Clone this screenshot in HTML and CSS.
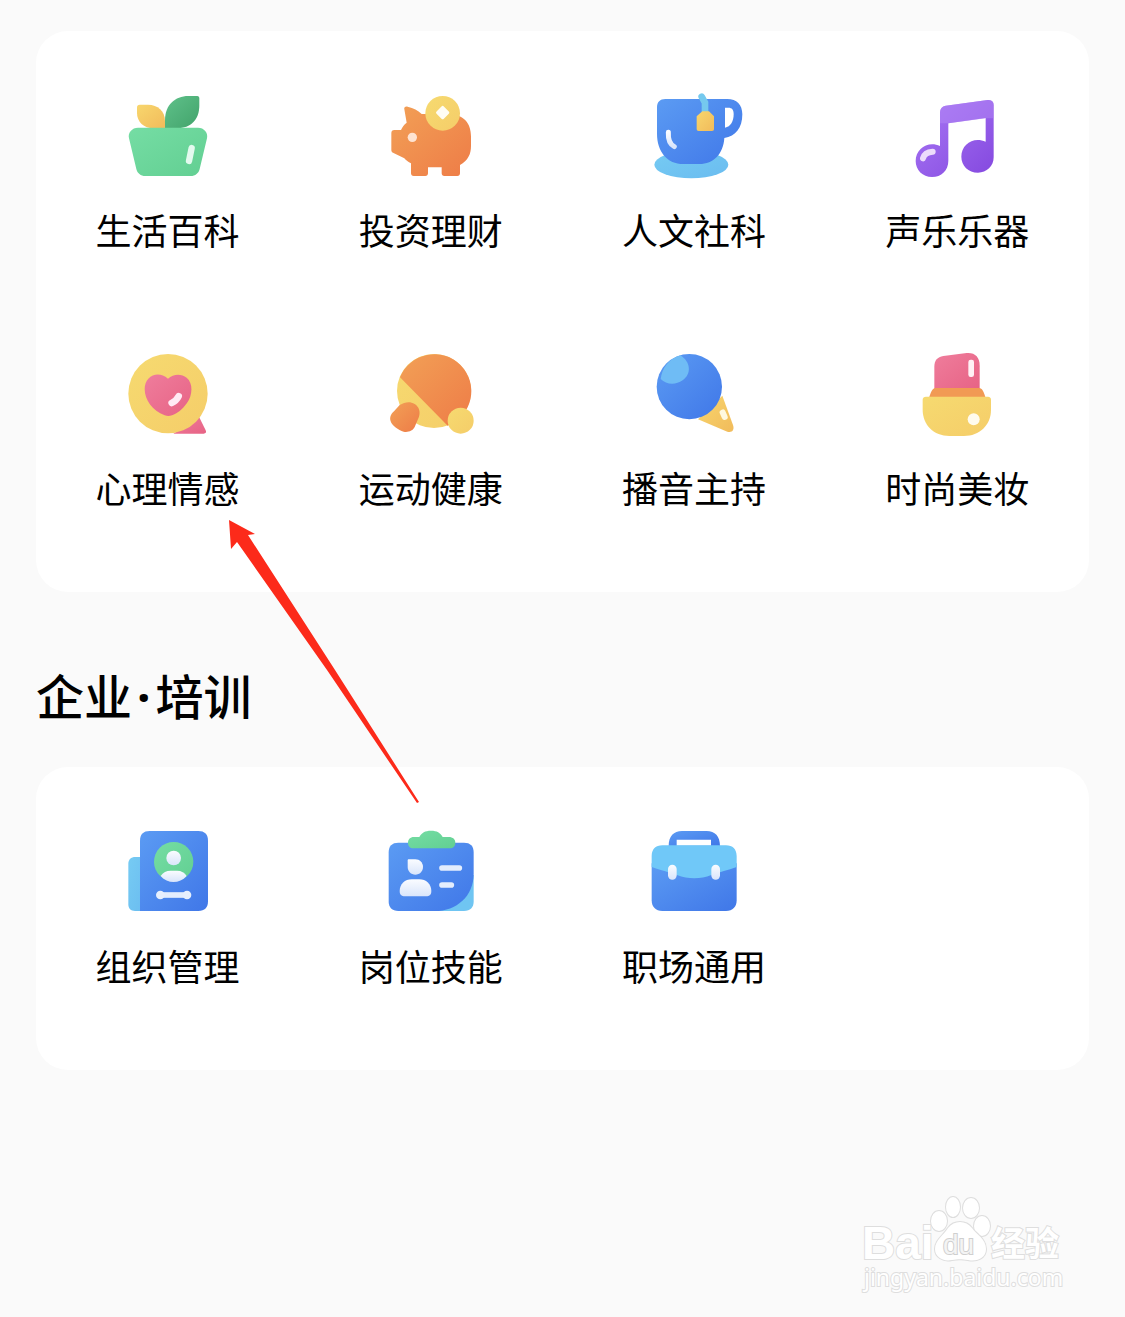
FILE: index.html
```html
<!DOCTYPE html>
<html lang="zh-CN">
  <head>
    <meta charset="utf-8">
    <meta name="viewport" content="width=device-width, initial-scale=1">
    <title>企业·培训</title>
    <link rel="stylesheet" href="styles.css">
  </head>
  <body>
    <svg class="defs" width="0" height="0" aria-hidden="true">
      <defs>
        <linearGradient id="blue" x1="0" y1="0" x2="1" y2="1"><stop offset="0" stop-color="#5b9bf3"/><stop offset="1" stop-color="#4077e8"/></linearGradient>
        <linearGradient id="sky" x1="0" y1="0" x2="1" y2="1"><stop offset="0" stop-color="#76cbf3"/><stop offset="1" stop-color="#6abcf0"/></linearGradient>
        <linearGradient id="green" x1="0" y1="0" x2="1" y2="1"><stop offset="0" stop-color="#75dda4"/><stop offset="1" stop-color="#62cf92"/></linearGradient>
        <linearGradient id="leaf" x1="0" y1="0" x2="1" y2="1"><stop offset="0" stop-color="#5fc18a"/><stop offset="1" stop-color="#42a36b"/></linearGradient>
        <linearGradient id="orange" x1="0" y1="0" x2="1" y2="1"><stop offset="0" stop-color="#f2a056"/><stop offset="1" stop-color="#ee7c47"/></linearGradient>
        <linearGradient id="yellow" x1="0" y1="0" x2="1" y2="1"><stop offset="0" stop-color="#f6da70"/><stop offset="1" stop-color="#f5cd69"/></linearGradient>
        <linearGradient id="amber" x1="0" y1="0" x2="1" y2="1"><stop offset="0" stop-color="#f8d66d"/><stop offset="1" stop-color="#f1bb5b"/></linearGradient>
        <linearGradient id="pink" x1="0" y1="0" x2="1" y2="1"><stop offset="0" stop-color="#ef7d9c"/><stop offset="1" stop-color="#e76385"/></linearGradient>
        <linearGradient id="purple" x1="0" y1="0" x2="1" y2="1"><stop offset="0" stop-color="#a978f5"/><stop offset="1" stop-color="#8448df"/></linearGradient>
        <linearGradient id="shine" x1="0" y1="0" x2="0" y2="1"><stop offset="0" stop-color="#fafcff"/><stop offset="1" stop-color="#d9e5fb"/></linearGradient>
      </defs>
    </svg>

    <main class="page">
      <nav class="card">
        <a class="item" href="#life">
          <svg class="icon" viewBox="-6 0 360 330" aria-hidden="true">
            <path fill="url(#amber)" d="M89 74h25c29 0 51 19 51 49v22h-34c-30 0-50-20-50-46V82c0-5 3-8 8-8z"/>
            <path fill="url(#leaf)" d="M165 145v-25c0-45 30-72 70-72h27c4 0 6 3 6 7v21c0 43-25 69-67 69z"/>
            <path fill="url(#green)" d="M84 143h180c18 0 31 15 27 32l-22 92c-3 13-13 21-27 21H106c-14 0-24-8-27-21l-22-92c-4-17 9-32 27-32z"/>
            <path stroke="#e4faef" stroke-width="19" stroke-linecap="round" d="M245 204l-8 39"/>
          </svg>
          <span class="label">生活百科</span>
        </a>
        <a class="item" href="#finance">
          <svg class="icon" viewBox="-12 0 360 330" aria-hidden="true">
            <path fill="url(#orange)" d="M88 88c-2-6 4-10 10-8 18 4 30 10 42 22h80c44 0 68 26 68 67v29c0 25-9 43-33 57v25c0 5-3 8-8 8h-39c-5 0-8-3-8-8v-18h-41v18c0 5-3 8-8 8h-35c-5 0-8-3-8-8v-30c-8-4-15-9-20-15l-34-17c-4-2-5-5-5-9v-50c0-6 3-9 9-9h20c4-9 9-16 17-22z"/>
            <circle cx="203" cy="100" r="52" fill="url(#yellow)"/>
            <rect x="188" y="82" width="31" height="31" rx="5" fill="#fffdf4" transform="rotate(45 203 97)"/>
            <circle cx="112" cy="172" r="14" fill="#fee3d1"/>
          </svg>
          <span class="label">投资理财</span>
        </a>
        <a class="item" href="#humanities">
          <svg class="icon" viewBox="-18 0 360 330" aria-hidden="true">
            <ellipse cx="154" cy="254" rx="111" ry="41" fill="url(#sky)"/>
            <path fill="url(#blue)" fill-rule="evenodd" d="M76 57h186c28 0 45 17 45 46 0 40-20 67-54 71-3 48-32 78-75 78h-48c-48 0-79-37-79-91V82c0-16 9-25 25-25zm179 26v60c17-3 26-19 26-41 0-13-5-19-16-19z"/>
            <path stroke="#75c9ee" stroke-width="20" stroke-linecap="round" fill="none" d="M185 50l10 18v35"/>
            <path fill="url(#amber)" d="M187 94h20l15 15v38c0 4-2 6-6 6h-40c-4 0-6-2-6-6v-38z"/>
            <path stroke="url(#shine)" stroke-width="15" stroke-linecap="round" fill="none" d="M85 157c-1 21 5 36 18 43"/>
          </svg>
          <span class="label">人文社科</span>
        </a>
        <a class="item" href="#music">
          <svg class="icon" viewBox="-9 0 360 330" aria-hidden="true">
            <path fill="url(#purple)" d="M120 97c0-11 6-18 17-20l126-17c12-2 18 5 18 15v157c0 27-21 46-47 46-29 0-50-21-50-48 0-38 37-61 73-45v-71l-112 16v112c0 29-21 49-49 49s-49-21-49-48c0-37 37-61 73-45z"/>
            <path fill="#b487f5" d="M120 97c0-11 6-18 17-20l126-17c12-2 18 5 18 15v40h-24l-112 15h-25z" opacity=".5"/>
            <path stroke="#eddcfb" stroke-width="18" stroke-linecap="round" fill="none" d="M69 235c3-12 12-19 29-20"/>
          </svg>
          <span class="label">声乐乐器</span>
        </a>
        <a class="item" href="#psychology">
          <svg class="icon" viewBox="-6 -6 360 330" aria-hidden="true">
            <path fill="url(#pink)" d="M267 230l20 41c3 6 0 10-6 10h-91z"/>
            <circle cx="174" cy="161" r="119" fill="url(#yellow)"/>
            <path fill="url(#pink)" d="M174 116c16-15 40-16 56-3 20 16 18 53 1 76-14 20-29 31-45 37-8 3-14 3-22 0-37-15-60-46-60-79 0-38 39-58 70-31z"/>
            <path stroke="#ffeaf4" stroke-width="20" stroke-linecap="round" fill="none" d="M185 189c9-4 16-10 21-20"/>
          </svg>
          <span class="label">心理情感</span>
        </a>
        <a class="item" href="#sport">
          <svg class="icon" viewBox="-12 -6 360 330" aria-hidden="true">
            <circle cx="177" cy="153" r="111" fill="url(#yellow)"/>
            <path fill="url(#orange)" d="M75 112a111 111 0 1 1 143 145z"/>
            <path fill="url(#orange)" d="M74 195c15-9 31-12 45-3 13 8 18 23 13 38l-13 31c-5 11-20 17-33 14-16-4-35-18-39-31-4-11 1-23 10-30z"/>
            <circle cx="257" cy="242" r="39" fill="url(#yellow)"/>
          </svg>
          <span class="label">运动健康</span>
        </a>
        <a class="item" href="#broadcast">
          <svg class="icon" viewBox="-18 -6 360 330" aria-hidden="true">
            <path fill="url(#amber)" d="M247 167l32 88c5 15-3 24-17 20l-88-37z"/>
            <circle cx="148" cy="140" r="98" fill="url(#blue)"/>
            <path fill="#6fbcf5" d="M121 46c31 19 35 56 7 75-22 15-49 13-66-4 4-33 25-61 59-71z"/>
            <rect x="242" y="208" width="18" height="32" rx="8" fill="#fff9df" transform="rotate(-24 251 224)"/>
          </svg>
          <span class="label">播音主持</span>
        </a>
        <a class="item" href="#beauty">
          <svg class="icon" viewBox="-9 -6 360 330" aria-hidden="true">
            <path fill="url(#pink)" d="M103 80c0-19 9-29 27-32l70-9c25-2 39 12 39 38v72H103z"/>
            <path fill="#f19a54" d="M106 144h132c8 1 12 8 18 27H88c5-18 10-25 18-27z"/>
            <path fill="url(#yellow)" d="M78 170h186c6 0 9 4 9 9v31c0 45-35 78-81 78h-44c-47 0-80-34-80-78v-31c0-6 4-9 10-9z"/>
            <rect x="205" y="59" width="17" height="52" rx="7" fill="#fff1f5"/>
            <circle cx="221" cy="238" r="18" fill="#fffbed"/>
          </svg>
          <span class="label">时尚美妆</span>
        </a>
      </nav>

      <h2 class="title">企业<span class="dot">·</span>培训</h2>

      <nav class="card">
        <a class="item" href="#organization">
          <svg class="icon" viewBox="-6 3 360 330" aria-hidden="true">
            <path fill="url(#sky)" d="M76 126h30v162H75c-13 0-20-7-20-20V147c0-14 8-21 21-21z"/>
            <path fill="url(#blue)" d="M119 48h146c19 0 29 10 29 29v182c0 19-10 29-29 29H90V77c0-19 10-29 29-29z"/>
            <circle cx="191" cy="140" r="59" fill="url(#green)"/>
            <circle cx="191" cy="129" r="22" fill="url(#shine)"/>
            <path fill="url(#shine)" d="M152 183c7-11 17-16 30-16h19c13 0 23 6 29 16-22 24-57 24-78 0z"/>
            <path stroke="#e3edfd" stroke-width="17" d="M149 240h84"/>
            <circle cx="151" cy="240" r="13" fill="#e6effd"/>
            <circle cx="231" cy="240" r="13" fill="#e6effd"/>
          </svg>
          <span class="label">组织管理</span>
        </a>
        <a class="item" href="#skills">
          <svg class="icon" viewBox="-12 3 360 330" aria-hidden="true">
            <path fill="#6fc5f2" d="M180 180h116v79c0 19-10 29-29 29h-87z"/>
            <path fill="url(#blue)" d="M70 83h197c19 0 29 10 29 29v64c0 67-51 112-117 112H70c-19 0-29-10-29-29V112c0-19 10-29 29-29z"/>
            <path fill="url(#green)" d="M116 66h17c7-13 17-19 35-19s28 6 35 19h18c13 0 20 7 20 17s-6 17-17 17H115c-10 0-16-7-16-17s7-17 17-17z"/>
            <path fill="url(#shine)" d="M102 133h19c13 0 23 10 23 23s-10 23-23 23-23-10-23-23v-18c0-4 1-5 4-5z"/>
            <path fill="url(#shine)" d="M110 193h23c20 0 36 14 36 35 0 11-5 16-16 16H90c-11 0-16-5-16-16 0-21 16-35 36-35z"/>
            <path stroke="#e3edfd" stroke-width="17" stroke-linecap="round" d="M201 159h52M201 210h28"/>
          </svg>
          <span class="label">岗位技能</span>
        </a>
        <a class="item" href="#workplace">
          <svg class="icon" viewBox="-18 3 360 330" aria-hidden="true">
            <path fill="url(#blue)" fill-rule="evenodd" d="M126 48h74c25 0 40 15 40 46H86c0-31 15-46 40-46zm-16 26v18h103V74z"/>
            <path fill="url(#blue)" d="M35 145h255v111c0 20-12 32-32 32H67c-20 0-32-12-32-32z"/>
            <path fill="#70c8f8" d="M67 91h191c20 0 32 12 32 32v33c-27 10-50 15-76 24-33 13-69 13-103 0-26-9-49-14-76-24v-33c0-20 12-32 32-32z"/>
            <rect x="84" y="149" width="26" height="45" rx="13" fill="url(#shine)"/>
            <rect x="214" y="149" width="26" height="45" rx="13" fill="url(#shine)"/>
          </svg>
          <span class="label">职场通用</span>
        </a>
      </nav>

      <!-- pointer to 心理情感 -->
      <svg class="arrow" viewBox="0 0 200 290" aria-hidden="true">
        <path fill="#fc2a1a" d="M4 5l26 14-7 1 87 135 84 132-2 1L102 155 12 27l-6 7z"/>
      </svg>
    </main>

    <footer class="footer">
      <svg class="watermark" viewBox="0 0 230 130" role="img" aria-label="Baidu 经验">
        <g class="mark">
          <text class="brand" x="12" y="79">Bai</text>
          <ellipse cx="89" cy="41" rx="8" ry="10"/>
          <ellipse cx="103" cy="27" rx="7" ry="10"/>
          <ellipse cx="121" cy="28" rx="8" ry="10"/>
          <ellipse cx="132" cy="46" rx="8" ry="10"/>
          <path d="M98 48c6-8 18-8 24 0 4 6 14 11 14 21 0 9-9 13-18 11-6-1-10-1-16 0-9 2-17-3-17-11 0-9 9-14 13-21z"/>
          <text class="du" x="93" y="74">du</text>
          <text class="cjk" x="141" y="76">经验</text>
          <text class="site" x="14" y="106">jingyan.baidu.com</text>
        </g>
      </svg>
    </footer>
  </body>
</html>
```
FILE: styles.css
```css
* {
  box-sizing: border-box;
}
body {
  margin: 0;
  background-color: #fafafa;
  color: #000;
  font-family: "Noto Sans CJK SC", sans-serif;
}
.defs {
  position: absolute;
}
.page {
  position: relative;
  padding: 31px 36px 0;
}
.card {
  display: grid;
  grid-template-columns: repeat(4, 1fr);
  row-gap: 84px;
  padding: 49px 0 80px;
  background-color: #fff;
  border-radius: 32px;
}
.item {
  display: flex;
  flex-direction: column;
  align-items: center;
  gap: 14px;
  color: inherit;
  text-decoration: none;
}
.icon {
  width: 120px;
  height: 110px;
  fill: none;
}
.label {
  font-size: 36px;
  line-height: 50px;
  white-space: nowrap;
}
.title {
  margin: 70px 0 41px;
  font-size: 48px;
  font-weight: 500;
  line-height: 64px;
}
.dot {
  padding: 0 5px;
  font-family: "Noto Sans", sans-serif;
  font-weight: bold;
  line-height: 1;
}
/* drawn over both cards */
.arrow {
  position: absolute;
  top: 515px;
  left: 225px;
  width: 200px;
  height: 290px;
  pointer-events: none;
}
.footer {
  display: flex;
  justify-content: flex-end;
  padding: 110px 45px 0;
}
.watermark {
  width: 230px;
  height: 130px;
}
.mark {
  fill: #fff;
  stroke: #dedede;
  stroke-width: 2px;
  paint-order: stroke;
  font-family: "Liberation Sans", sans-serif;
}
.brand {
  font-size: 46px;
  font-weight: bold;
}
.du {
  font-size: 28px;
  fill: #f4f4f4;
  stroke: #cfcfcf;
}
.cjk {
  font-family: "Noto Sans CJK SC", sans-serif;
  font-size: 34px;
  font-weight: bold;
}
.site {
  font-family: "Noto Sans", sans-serif;
  font-size: 23px;
}
```
